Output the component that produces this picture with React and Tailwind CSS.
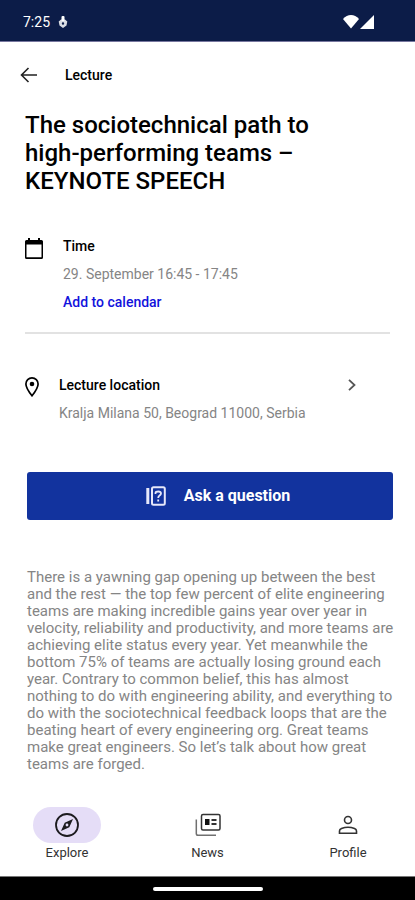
const description = [
  'There is a yawning gap opening up between the best',
  'and the rest — the top few percent of elite engineering',
  'teams are making incredible gains year over year in',
  'velocity, reliability and productivity, and more teams are',
  'achieving elite status every year. Yet meanwhile the',
  'bottom 75% of teams are actually losing ground each',
  'year. Contrary to common belief, this has almost',
  'nothing to do with engineering ability, and everything to',
  'do with the sociotechnical feedback loops that are the',
  'beating heart of every engineering org. Great teams',
  'make great engineers. So let’s talk about how great',
  'teams are forged.',
];

function StatusBar() {
  return (
    <div className="flex h-[42px] items-center justify-between border-b border-[#77779f] bg-[#0c1c48] pt-[2px] pr-[41px] pl-[23px] text-white">
      <div className="flex items-center gap-2">
        <span className="text-sm">7:25</span>
        <svg className="h-3 w-[10px]" viewBox="0 0 10 12" fill="currentColor" aria-hidden="true">
          <rect x="3.5" y="0" width="3" height="5" rx="1" />
          <path fillRule="evenodd" d="M3 3.500h4L9.300 5.500 8.500 9.500 5 12 1.500 9.500 .7 5.500ZM5 6.300a1.200 1.200 0 1 0 0 2.400 1.200 1.200 0 0 0 0-2.400Z" opacity=".85" />
        </svg>
      </div>
      <div className="flex items-center gap-px">
        <svg className="h-[14px] w-4" viewBox="0 0 16 14" fill="currentColor" aria-hidden="true">
          <path d="M0 4Q3.500 0 8 0T16 4L8 13.500Z" />
        </svg>
        <svg className="h-[14px] w-[14px]" viewBox="0 0 14 14" fill="currentColor" aria-hidden="true">
          <path d="M14 0v14H0Z" />
        </svg>
      </div>
    </div>
  );
}

function ExploreIcon() {
  return (
    <svg className="h-6 w-6" viewBox="0 0 24 24" fill="none" stroke="currentColor" aria-hidden="true">
      <circle cx="12" cy="12" r="11" strokeWidth="1.800" />
      <path fill="currentColor" stroke="none" fillRule="evenodd" d="M18 6l-3.700 8.300L6 18l3.700-8.300ZM12 10.600a1.400 1.400 0 1 0 0 2.800 1.400 1.400 0 0 0 0-2.800Z" />
    </svg>
  );
}

function NewsIcon() {
  return (
    <svg className="h-6 w-[26px]" viewBox="0 0 26 24" fill="none" stroke="#333" aria-hidden="true">
      <rect x="6.500" y="1.500" width="18.500" height="15.500" rx="1.500" strokeWidth="1.500" />
      <path d="M1.300 6.500v14q0 1.800 1.800 1.800H21" strokeWidth="1.500" opacity=".7" />
      <path d="M10 6h4.500v6H10Z" fill="#111" stroke="none" />
      <path d="M16.500 7h5M16.500 11h5" strokeWidth="1.800" />
    </svg>
  );
}

function ProfileIcon() {
  return (
    <svg className="h-5 w-5" viewBox="0 0 20 20" fill="none" stroke="#333" strokeWidth="1.600" aria-hidden="true">
      <circle cx="10" cy="5" r="3.500" />
      <path d="M1.500 18.300V16q0-1.600 2-2.500 6.500-2.600 13 0 2 .9 2 2.500v2.300Z" />
    </svg>
  );
}

function NavItem({ icon, label, active }) {
  return (
    <a href="#" aria-current={active ? 'page' : undefined} className="flex w-[68px] flex-col items-center gap-[2px] text-[#1c1b1f]">
      <span className={active ? 'flex h-9 w-full items-center justify-center rounded-full bg-[#e5ddf7]' : 'flex h-9 w-full items-center justify-center'}>
        {icon}
      </span>
      <span className="text-[13px] leading-4 text-[#333]">{label}</span>
    </a>
  );
}

export default function App() {
  return (
    <div className="flex min-h-screen flex-col bg-white font-['Roboto',sans-serif] text-black">
      <StatusBar />

      <header className="flex h-[66px] items-center gap-[27px] px-5">
        <button type="button" aria-label="Back">
          <svg className="h-[18px] w-[18px]" viewBox="0 0 18 18" fill="none" stroke="#222" strokeWidth="1.600" aria-hidden="true">
            <path d="M17 9H2M8.500 2 1.500 9l7 7" />
          </svg>
        </button>
        <span className="text-[14px] font-medium">Lecture</span>
      </header>

      <main className="flex-1 px-[25px]">
        <h1 className="mt-[3px] text-[24px] leading-7 font-medium">
          The sociotechnical path to<br />high-performing teams –<br />KEYNOTE SPEECH
        </h1>

        <section className="mt-[41px] flex gap-5 border-b-2 border-[#e2e2e2] pb-5">
          <svg className="mt-[2px] h-[21px] w-[18px]" viewBox="0 0 18 21" aria-hidden="true">
            <path d="M3 0h2v2h8V0h2v2h1.500q1.500 0 1.500 1.500v16q0 1.500-1.500 1.500h-15Q0 21 0 19.500v-16Q0 2 1.500 2H3ZM1.500 6.500v12.800h15V6.500Z" fillRule="evenodd" />
          </svg>
          <div className="flex flex-col items-start gap-2">
            <h2 className="text-[14px] leading-5 font-medium">Time</h2>
            <p className="text-[14px] leading-5 text-[#858585]">29. September 16:45 - 17:45</p>
            <button type="button" className="text-[14px] leading-5 font-medium text-[#1212dc]">Add to calendar</button>
          </div>
        </section>

        <section className="mt-[41px] flex gap-5">
          <svg className="mt-[2px] h-5 w-[14px]" viewBox="0 0 14 20" fill="none" stroke="currentColor" aria-hidden="true">
            <path d="M7 18.800C3.200 14 .9 10.500.9 7a6.100 6.100 0 0 1 12.200 0c0 3.500-2.300 7-6.100 11.800Z" strokeWidth="1.700" />
            <circle cx="7" cy="7" r="2.300" fill="currentColor" stroke="none" />
          </svg>
          <div className="flex flex-1 flex-col gap-2">
            <h2 className="text-[14px] leading-5 font-medium">Lecture location</h2>
            <p className="text-[14px] leading-5 text-[#858585]">Kralja Milana 50, Beograd 11000, Serbia</p>
          </div>
          <button type="button" aria-label="Open location" className="mr-[34px] h-5">
            <svg className="h-3 w-2" viewBox="0 0 8 12" fill="none" stroke="#555" strokeWidth="1.800" aria-hidden="true">
              <path d="M1 .8 6.500 6 1 11.200" />
            </svg>
          </button>
        </section>

        <button type="button" className="mt-[49px] -mr-[3px] ml-[2px] flex h-12 w-[calc(100%+1px)] items-center justify-center gap-[18px] rounded-[3px] bg-[#12339e] pl-4 text-white">
          <svg className="h-5 w-5" viewBox="0 0 20 20" fill="none" stroke="#e6e8fa" aria-hidden="true">
            <path d="M1.800 2v16" strokeWidth="3" />
            <rect x="6" y="1.200" width="12.800" height="17.600" rx="1.500" strokeWidth="2" />
            <path d="M9.500 8V7q0-1.500 2.700-1.500T15 7.500q0 1-1.400 2T12.200 12M12.200 13.500v2" strokeWidth="1.800" />
          </svg>
          <span className="text-[16px] font-bold">Ask a question</span>
        </button>

        <p className="mt-[49px] ml-[2px] text-[15px] leading-[17px] whitespace-pre text-[#858585]">
          {description.join('\n')}
        </p>
      </main>

      <nav aria-label="Main" className="flex items-start justify-between px-[33px] pb-[15px]">
        <NavItem icon={<ExploreIcon />} label="Explore" active />
        <NavItem icon={<NewsIcon />} label="News" />
        <NavItem icon={<ProfileIcon />} label="Profile" />
      </nav>

      <div className="flex h-6 items-center justify-center border-t border-[#777] bg-black">
        <span className="h-1 w-[110px] rounded-full bg-white" />
      </div>
    </div>
  );
}
